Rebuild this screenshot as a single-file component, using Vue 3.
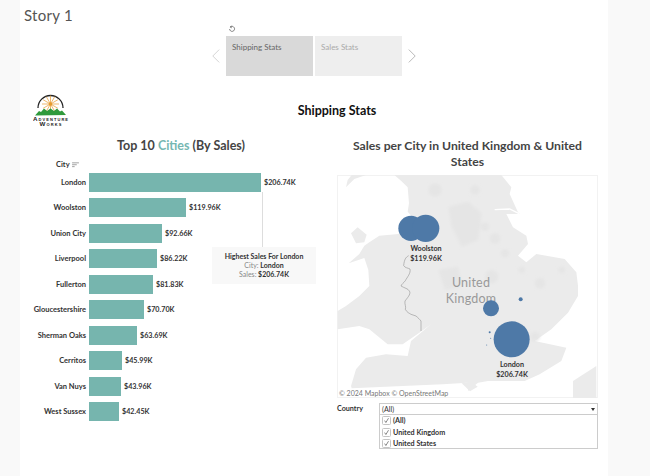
<template>
  <div class="page">
    <div class="gutter"></div>
    <div class="main">
      <div class="story-title">Story 1</div>

      <div class="story-nav">
        <svg class="reset" viewBox="0 0 10 10" fill="none" stroke="#555" stroke-width="0.9">
          <path d="M3 2.6a3.1 3.1 0 1 1-1 2.4"></path>
          <path d="M4.6 0.8 2.8 2.6l2 1"></path>
        </svg>
        <svg class="arrow" viewBox="0 0 10 18" fill="none" stroke="#cfcfcf" stroke-width="1.1"><polyline points="9,1 1,9 9,17"></polyline></svg>
        <div class="story-point active">Shipping Stats</div>
        <div class="story-point">Sales Stats</div>
        <svg class="arrow" viewBox="0 0 10 18" fill="none" stroke="#afafaf" stroke-width="1.1"><polyline points="1,1 9,9 1,17"></polyline></svg>
      </div>

      <div class="brand-row">
        <svg class="logo" viewBox="0 0 36 36">
          <path d="M5 16a12.500 12.500 0 1 1 25 0" fill="none" stroke="#222" stroke-width="1.300"></path>
          <g stroke="#e69a2e" stroke-width="0.700">
            <line v-for="ray in logoRays" :key="ray.a" x1="17.500" y1="12" :x2="ray.x" :y2="ray.y"></line>
          </g>
          <circle cx="17.500" cy="12" r="1.800" fill="#e69a2e"></circle>
          <path d="M2 23.500 6 19l2 1 3-3.500 3 2.500 3.500-2.500 3.500 2.500 3-2.500 3 3 2-1 4 4.500z" fill="#2f9a3c"></path>
          <text class="logo-text" x="17.500" y="28.800" textLength="35">Adventure</text>
          <text class="logo-text" x="17.500" y="34.300" textLength="22">Works</text>
        </svg>
        <div class="page-title">Shipping Stats</div>
      </div>

      <div class="columns">
        <section class="bar-col">
          <h2 class="chart-title bar-title">Top 10 <span class="teal">Cities</span> (By Sales)</h2>
          <div class="axis-head">
            <span>City</span>
            <svg class="sort" viewBox="0 0 8 7" stroke="#777" stroke-width="0.800"><line x1="0" y1="1" x2="8" y2="1"></line><line x1="0" y1="3.200" x2="5.500" y2="3.200"></line><line x1="0" y1="5.400" x2="3" y2="5.400"></line></svg>
          </div>
          <div class="bars">
            <div v-for="row in cities" :key="row.city" class="bar-row">
              <div class="city">{{ row.city }}</div>
              <div class="bar" :style="{ width: row.width + 'px' }"></div>
              <div class="value">{{ row.sales }}</div>
            </div>
          </div>
          <div class="leader"></div>
          <div class="note">
            <div class="note-head">Highest Sales For London</div>
            <div><span class="muted">City:</span> London</div>
            <div><span class="muted">Sales:</span> $206.74K</div>
          </div>
        </section>

        <section class="map-col">
          <h2 class="chart-title wide">Sales per City in United Kingdom &amp; United States</h2>
          <div class="map">
            <svg class="map-svg" viewBox="6 15 783 669">
              <defs>
                <filter id="soft" x="-10%" y="-10%" width="120%" height="120%"><feGaussianBlur stdDeviation="1.500"></feGaussianBlur></filter>
                <filter id="softer" x="-10%" y="-10%" width="120%" height="120%"><feGaussianBlur stdDeviation="5"></feGaussianBlur></filter>
              </defs>
              <g fill="#ebebeb" filter="url(#soft)">
                <path d="M33 52 58 27 93 15H50L38 30z"></path>
                <path d="M178 15 198 32 218 52 222 100 218 125 240 150 190 192 133 197 103 217 88 227 73 252 41 280 88 264 100 300 103 348 73 378 33 408 8 423V478L73 468 103 478 158 523 203 523 253 488 288 463 228 513 218 558 153 553 93 563 63 598 48 648 50 655 323 643 398 638 399 663 429 638 459 633 569 633 614 613 679 573 694 533 599 513 649 478 699 428 729 378V347L724 307 689 267 604 252 574 277 549 257 579 222 574 197 534 172 514 132H554L549 127 524 72 529 52 499 15z"></path>
                <path d="M48 190 68 172 95 194 88 217 63 220z"></path>
                <path d="M380 640 410 636 428 650 405 664z"></path>
                <path d="M714 684V633L784 588V684z"></path>
              </g>
              <g fill="#e5e5e5" filter="url(#softer)">
                <path d="M340 110 400 95 440 130 430 210 380 230 350 170z"></path>
                <path d="M310 300 370 290 380 350 330 360z"></path>
                <circle cx="480" cy="205" r="16"></circle>
                <circle cx="470" cy="320" r="20"></circle>
                <circle cx="450" cy="170" r="12"></circle>
                <circle cx="510" cy="250" r="12"></circle>
                <circle cx="615" cy="340" r="16"></circle>
                <circle cx="600" cy="500" r="14"></circle>
                <circle cx="300" cy="60" r="20"></circle>
                <circle cx="420" cy="60" r="14"></circle>
                <circle cx="680" cy="300" r="10"></circle>
                <circle cx="560" cy="300" r="10"></circle>
              </g>
              <path d="M479 119 524 117 552 131" fill="none" stroke="#fff" stroke-width="4"></path>
              <path d="M221 257C212 262 208 268 206 287 210 294 220 294 225 297 228 310 216 322 211 332 205 340 200 342 198 348 208 354 220 356 223 363 228 370 222 378 210 393 208 402 214 410 211 418 216 428 224 430 228 433L243 438C250 444 254 448 258 453V483" fill="none" stroke="#808080" stroke-width="1.500"></path>
            </svg>
            <div class="country-label">United<br>Kingdom</div>
            <svg class="map-svg bubbles" viewBox="6 15 783 669">
              <g fill="#4e79a7">
                <circle cx="228" cy="175" r="38"></circle>
                <circle cx="272" cy="175" r="41"></circle>
                <circle cx="468" cy="415" r="24"></circle>
                <circle cx="557" cy="388" r="6"></circle>
                <circle cx="530" cy="508" r="54"></circle>
                <circle cx="464" cy="487" r="3"></circle>
                <circle cx="467" cy="505" r="1.500"></circle>
                <circle cx="455" cy="525" r="1.500"></circle>
              </g>
            </svg>
            <div class="map-label woolston">Woolston<br>$119.96K</div>
            <div class="map-label london">London<br>$206.74K</div>
            <div class="credit">© 2024 Mapbox © OpenStreetMap</div>
          </div>

          <div class="filter">
            <div class="filter-label">Country</div>
            <div class="filter-box">
              <div class="filter-head">
                <span>(All)</span>
                <span class="caret"></span>
              </div>
              <div v-for="item in countries" :key="item" class="filter-item">
                <svg class="check" viewBox="0 0 9 9">
                  <rect x="0.500" y="0.500" width="8" height="8" rx="1" fill="#fff" stroke="#c4c4c4"></rect>
                  <path d="M2.600 4.600 3.900 6.500 6.500 2.200" fill="none" stroke="#555" stroke-width="0.700"></path>
                </svg>
                <span>{{ item }}</span>
              </div>
            </div>
          </div>
        </section>
      </div>
    </div>
    <div class="gutter right"></div>
  </div>
</template>

<script setup>
const cities = [
  { city: 'London', sales: '$206.74K', width: 172 },
  { city: 'Woolston', sales: '$119.96K', width: 97 },
  { city: 'Union City', sales: '$92.66K', width: 73 },
  { city: 'Liverpool', sales: '$86.22K', width: 68 },
  { city: 'Fullerton', sales: '$81.83K', width: 64 },
  { city: 'Gloucestershire', sales: '$70.70K', width: 55 },
  { city: 'Sherman Oaks', sales: '$63.69K', width: 48 },
  { city: 'Cerritos', sales: '$45.99K', width: 33 },
  { city: 'Van Nuys', sales: '$43.96K', width: 32 },
  { city: 'West Sussex', sales: '$42.45K', width: 30 }
]

const countries = ['(All)', 'United Kingdom', 'United States']

const logoRays = Array.from({ length: 12 }, (_, i) => {
  const a = (i * Math.PI) / 6
  return { a: i, x: 17.5 + Math.cos(a) * 8.5, y: 12 + Math.sin(a) * 8.5 }
})
</script>

<style>
html, body {
  margin: 0;
  background: #fff;
}
</style>

<style scoped>
.page {
  display: flex;
  width: 650px;
  height: 476px;
  overflow: hidden;
  font-family: Lato, "Open Sans", sans-serif;
  color: #333;
}

.gutter {
  width: 20px;
  background: #f9f9f9;
}

.gutter.right {
  width: 42px;
}

.main {
  width: 588px;
  background: #fff;
}

.story-title {
  height: 30px;
  padding-left: 4px;
  font-size: 15px;
  line-height: 30px;
  letter-spacing: 0.3px;
  color: #555;
}

.story-nav {
  position: relative;
  display: flex;
  justify-content: center;
  align-items: center;
  gap: 2px;
  height: 40px;
  margin-top: 6px;
}

.reset {
  position: absolute;
  left: 208px;
  top: -11px;
  width: 8px;
  height: 8px;
}

.arrow {
  width: 8px;
  height: 16px;
  margin: 0 4px;
}

.story-point {
  width: 87px;
  height: 40px;
  padding: 6px;
  box-sizing: border-box;
  background: #eeeeee;
  font-size: 8px;
  color: #aaa;
}

.story-point.active {
  background: #d9d9d9;
  color: #666;
}

.brand-row {
  display: flex;
  align-items: center;
  height: 44px;
  margin-top: 12px;
  padding-left: 13px;
}

.logo {
  width: 36px;
  height: 36px;
}

.logo-text {
  font-family: "Liberation Sans", sans-serif;
  font-size: 6.200px;
  font-weight: 700;
  font-variant: small-caps;
  text-anchor: middle;
  fill: #222;
}

.page-title {
  flex: 1;
  padding-right: 3px;
  text-align: center;
  font-size: 12.500px;
  font-weight: 700;
  color: #111;
}

.columns {
  display: flex;
  margin-top: 6px;
}

.bar-col {
  position: relative;
  width: 317px;
}

.map-col {
  width: 261px;
}

.chart-title {
  margin: 0;
  font-size: 12.500px;
  font-weight: 700;
  line-height: 16px;
  text-align: center;
  color: #444;
}

.chart-title.wide {
  font-size: 12.200px;
}

.bar-title {
  padding-left: 5px;
}

.teal {
  color: #76b7b2;
}

.axis-head {
  display: flex;
  align-items: center;
  gap: 2px;
  height: 10px;
  padding: 5.500px 0 0 36px;
  font-size: 7.500px;
  font-weight: 700;
}

.sort {
  width: 7px;
  height: 6px;
}

.bars {
  display: flex;
  flex-direction: column;
}

.bar-row {
  display: flex;
  align-items: center;
  height: 25.500px;
  font-size: 7.500px;
  font-weight: 700;
}

.city {
  width: 66px;
  margin-right: 3px;
  text-align: right;
  white-space: nowrap;
}

.bar {
  height: 19px;
  background: #76b5ae;
}

.value {
  margin-left: 3px;
  font-size: 7.200px;
}

.leader {
  position: absolute;
  left: 242px;
  top: 54px;
  width: 1px;
  height: 56px;
  background: #ddd;
}

.note {
  position: absolute;
  left: 192px;
  top: 109px;
  width: 104px;
  height: 37px;
  padding-top: 5px;
  box-sizing: border-box;
  background: #f8f8f8;
  font-size: 7px;
  font-weight: 700;
  line-height: 9px;
  text-align: center;
}

.muted {
  font-weight: 400;
  color: #888;
}

.map {
  position: relative;
  height: 223px;
  margin-top: 5px;
  overflow: hidden;
  box-sizing: border-box;
  box-shadow: inset 0 0 0 1px #f2f2f2;
}

.map-svg {
  display: block;
  width: 261px;
  height: 223px;
}

.bubbles {
  position: absolute;
  left: 0;
  top: 0;
}

.country-label {
  position: absolute;
  left: 99px;
  top: 100px;
  width: 70px;
  font-size: 12.500px;
  line-height: 15.500px;
  letter-spacing: 0.2px;
  text-align: center;
  color: #999;
}

.map-label {
  position: absolute;
  width: 50px;
  font-size: 7.200px;
  font-weight: 700;
  line-height: 10px;
  text-align: center;
}

.woolston {
  left: 64px;
  top: 68.500px;
}

.london {
  left: 150px;
  top: 185px;
}

.credit {
  position: absolute;
  left: 2px;
  bottom: 1px;
  font-size: 7px;
  color: #777;
}

.filter {
  display: flex;
  align-items: flex-start;
  margin-top: 5px;
  font-size: 7.200px;
  font-weight: 700;
}

.filter-label {
  width: 42px;
  line-height: 11px;
}

.filter-box {
  flex: 1;
  height: 46px;
  box-sizing: border-box;
  border: 1px solid #ccc;
}

.filter-head {
  display: flex;
  justify-content: space-between;
  align-items: center;
  height: 10px;
  padding: 0 2px;
  border-bottom: 1px solid #ccc;
  font-weight: 400;
}

.caret {
  width: 0;
  height: 0;
  border-left: 2px solid transparent;
  border-right: 2px solid transparent;
  border-top: 3px solid #333;
}

.filter-item {
  display: flex;
  align-items: center;
  gap: 2px;
  height: 11.500px;
  padding-left: 2px;
}

.check {
  width: 9px;
  height: 9px;
}
</style>
